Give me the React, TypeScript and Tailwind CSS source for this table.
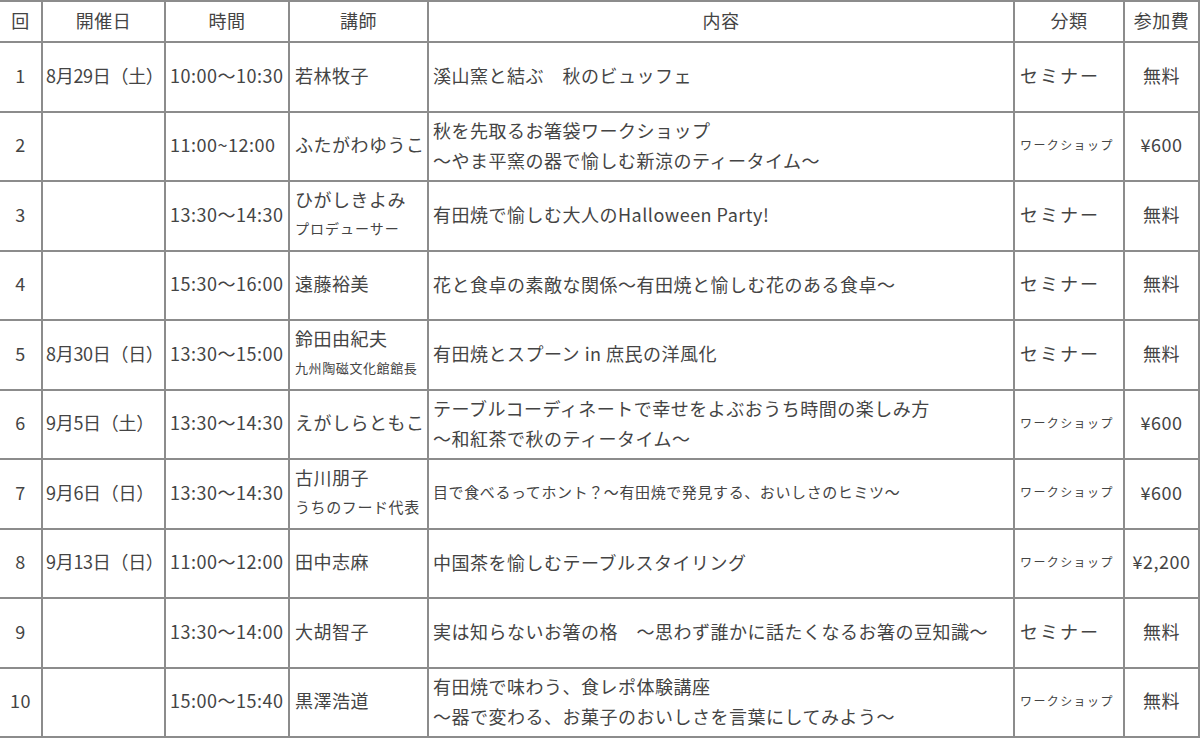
import React from "react";

type Row = {
  no: string;
  date: string;
  time: string;
  teacher: string;
  teacherSub?: string;
  teacherSubCls?: string;
  content: string[];
  contentSmall?: boolean;
  cat: "セミナー" | "ワークショップ";
  fee: string;
};

const rows: Row[] = [
  { no: "1", date: "8月29日（土）", time: "10:00～10:30", teacher: "若林牧子", content: ["溪山窯と結ぶ　秋のビュッフェ"], cat: "セミナー", fee: "無料" },
  { no: "2", date: "", time: "11:00~12:00", teacher: "ふたがわゆうこ", content: ["秋を先取るお箸袋ワークショップ", "～やま平窯の器で愉しむ新涼のティータイム～"], cat: "ワークショップ", fee: "¥600" },
  { no: "3", date: "", time: "13:30～14:30", teacher: "ひがしきよみ", teacherSub: "プロデューサー", teacherSubCls: "text-[14px] tracking-[1px]", content: ["有田焼で愉しむ大人のHalloween Party!"], cat: "セミナー", fee: "無料" },
  { no: "4", date: "", time: "15:30～16:00", teacher: "遠藤裕美", content: ["花と食卓の素敵な関係～有田焼と愉しむ花のある食卓～"], cat: "セミナー", fee: "無料" },
  { no: "5", date: "8月30日（日）", time: "13:30～15:00", teacher: "鈴田由紀夫", teacherSub: "九州陶磁文化館館長", teacherSubCls: "text-[13px] tracking-[0.6px]", content: ["有田焼とスプーン in 庶民の洋風化"], cat: "セミナー", fee: "無料" },
  { no: "6", date: "9月5日（土）", time: "13:30～14:30", teacher: "えがしらともこ", content: ["テーブルコーディネートで幸せをよぶおうち時間の楽しみ方", "～和紅茶で秋のティータイム～"], cat: "ワークショップ", fee: "¥600" },
  { no: "7", date: "9月6日（日）", time: "13:30～14:30", teacher: "古川朋子", teacherSub: "うちのフード代表", teacherSubCls: "text-[15px] tracking-[0.6px]", content: ["目で食べるってホント？～有田焼で発見する、おいしさのヒミツ～"], contentSmall: true, cat: "ワークショップ", fee: "¥600" },
  { no: "8", date: "9月13日（日）", time: "11:00～12:00", teacher: "田中志麻", content: ["中国茶を愉しむテーブルスタイリング"], cat: "ワークショップ", fee: "¥2,200" },
  { no: "9", date: "", time: "13:30～14:00", teacher: "大胡智子", content: ["実は知らないお箸の格　～思わず誰かに話たくなるお箸の豆知識～"], cat: "セミナー", fee: "無料" },
  { no: "10", date: "", time: "15:00～15:40", teacher: "黒澤浩道", content: ["有田焼で味わう、食レポ体験講座", "～器で変わる、お菓子のおいしさを言葉にしてみよう～"], cat: "ワークショップ", fee: "無料" },
];

const cell = "flex items-center pb-[3px] border-b-2 border-r-2 border-[#8c8c8c] whitespace-nowrap";

export default function App() {
  return (
    <div
      className="w-[1200px] h-[738px] overflow-hidden bg-white text-[#444] text-[18px] tracking-[0.5px] grid grid-cols-[43px_123px_124px_139px_586px_110px_75px] grid-rows-[41px_repeat(10,69.5px)] border-t-2 border-[#8c8c8c]"
      style={{ fontFamily: '"Noto Sans CJK JP", "Noto Sans", sans-serif' }}
    >
      <div className={`${cell} justify-center`}>回</div>
      <div className={`${cell} justify-center`}>開催日</div>
      <div className={`${cell} justify-center`}>時間</div>
      <div className={`${cell} justify-center`}>講師</div>
      <div className={`${cell} justify-center`}>内容</div>
      <div className={`${cell} justify-center`}>分類</div>
      <div className={`${cell} justify-center border-r-0`}>参加費</div>
      {rows.map((r) => (
        <React.Fragment key={r.no}>
          <div className={`${cell} justify-center`}>{r.no}</div>
          <div className={`${cell} pl-[3px] tracking-[-0.3px]`}>{r.date}</div>
          <div className={`${cell} pl-[4px]`}>{r.time}</div>
          <div className={`${cell} pl-[5px]`}>
            {r.teacherSub ? (
              <div className="flex flex-col leading-[29px]">
                <span>{r.teacher}</span>
                <span className={r.teacherSubCls}>{r.teacherSub}</span>
              </div>
            ) : (
              r.teacher
            )}
          </div>
          <div className={`${cell} pl-[4px]`}>
            <div className={`flex flex-col leading-[30px] ${r.contentSmall ? "text-[15px] tracking-[0.6px]" : ""}`}>
              {r.content.map((c, i) => (
                <span key={i}>{c}</span>
              ))}
            </div>
          </div>
          <div className={`${cell} pl-[5px]`}>
            {r.cat === "セミナー" ? (
              <span className="tracking-[2px]">セミナー</span>
            ) : (
              <span className="text-[12px] tracking-[1.4px]">ワークショップ</span>
            )}
          </div>
          <div className={`${cell} justify-center border-r-0`}>{r.fee}</div>
        </React.Fragment>
      ))}
    </div>
  );
}
